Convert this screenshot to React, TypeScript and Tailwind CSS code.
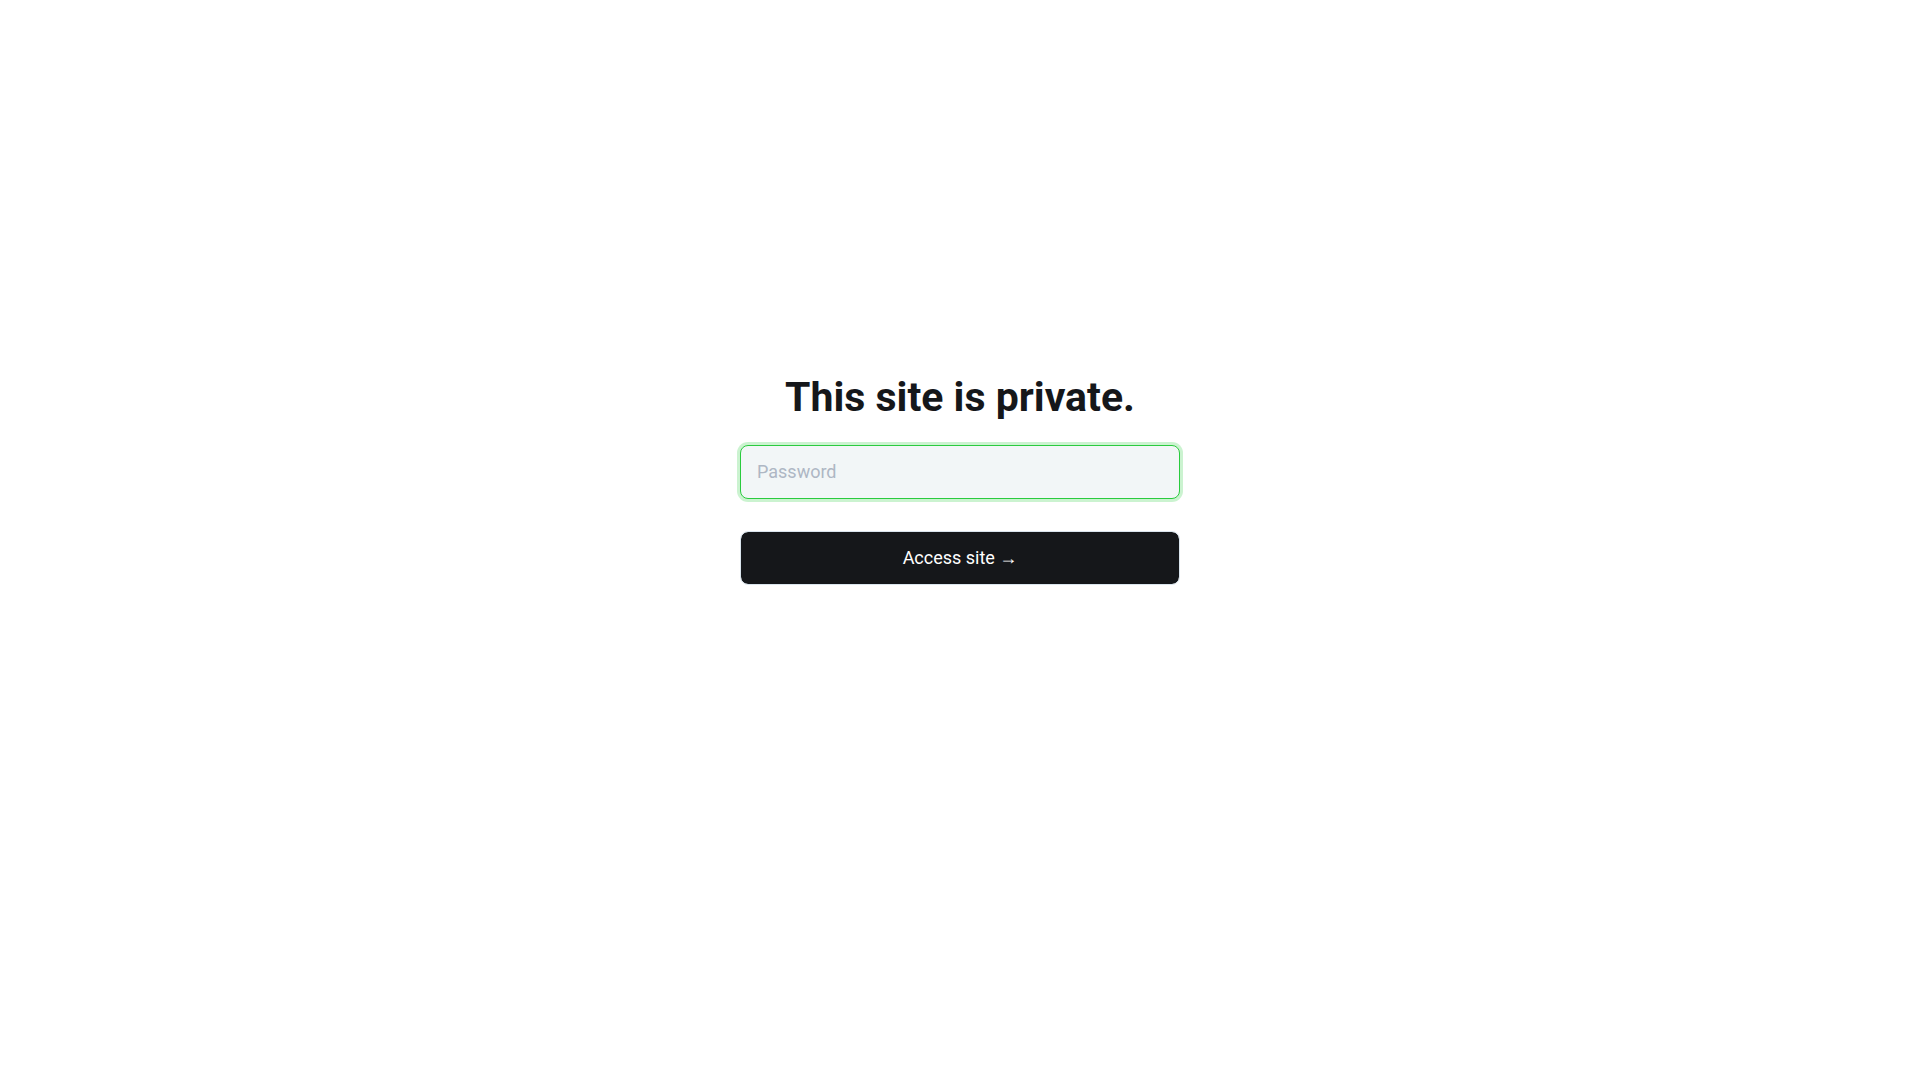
export default function App() {
  return (
    <main className="flex min-h-screen items-center justify-center bg-white px-4 font-['Roboto','Liberation_Sans',sans-serif] text-[#15171a]">
      <form className="mb-[126px] flex w-full max-w-[440px] flex-col" onSubmit={(e) => e.preventDefault()}>
        <h1 className="mb-5 text-center text-[41px] leading-[56px] font-bold">This site is private.</h1>
        <input
          type="password"
          aria-label="Password"
          placeholder="Password"
          className="h-[54px] w-full rounded-lg border border-[#2acb3e] bg-[#f2f6f7] px-4 pb-0.5 text-lg shadow-[0_0_0_3px_rgba(48,207,67,0.25)] outline-none placeholder:text-[#aeb7c4]"
        />
        <button
          type="submit"
          className="mt-8 h-[54px] w-full rounded-lg border border-[#dae5ed] bg-[#15171a] bg-clip-padding text-lg text-white"
        >
          Access site →
        </button>
      </form>
    </main>
  );
}
